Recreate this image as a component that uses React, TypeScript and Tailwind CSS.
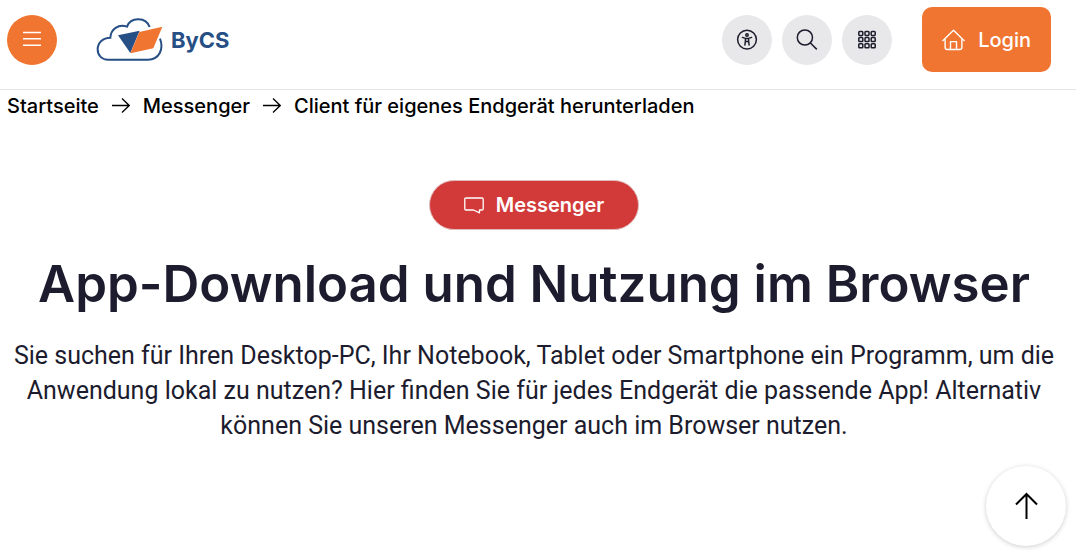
import React from 'react';

const crumbs = ['Startseite', 'Messenger', 'Client für eigenes Endgerät herunterladen'];

const Logo = () => (
  <svg width="66" height="43" viewBox="21 27 198 129" fill="none" overflow="visible" aria-hidden="true">
    <path
      d="M179 51 C169 21 122 19 111 50 C86 41 62 57 61 83 C39 83 23 98 23 118 C23 137 36 149 54 149 H174 C208 149 222 117 210 86"
      stroke="#264f85"
      strokeWidth="6"
    />
    <path d="M84 76 L149 62 L121 129 Z" fill="#264f85" />
    <path d="M148 66 L217 50 L190 115 L121 130 Z" fill="#f07531" />
  </svg>
);

const MenuIcon = () => (
  <svg width="18" height="18" viewBox="0 0 18 18" fill="none" stroke="currentColor" strokeWidth="1.4" aria-hidden="true">
    <path d="M0 1.5h18M0 7.8h18M0 14.2h18" />
  </svg>
);

const AccessIcon = () => (
  <svg width="22" height="22" viewBox="0 0 22 22" fill="none" stroke="currentColor" strokeWidth="1.5" strokeLinecap="round" strokeLinejoin="round" aria-hidden="true">
    <circle cx="11" cy="10.6" r="9.4" />
    <circle cx="11" cy="6" r="1.2" />
    <path d="M6.4 8.4 L9.4 9.4 V12 L8.9 16 M15.6 8.4 L12.6 9.4 V12 L13.1 16 M9.6 9.4 H12.4 M9.6 12.4 H12.4" />
  </svg>
);

const SearchIcon = () => (
  <svg width="22" height="22" viewBox="0 0 22 22" fill="none" stroke="currentColor" strokeWidth="1.5" aria-hidden="true">
    <circle cx="8.9" cy="8.5" r="7.6" />
    <path d="M14.2 13.8 L20.8 20.4" />
  </svg>
);

const GridIcon = () => (
  <svg width="20" height="20" viewBox="0 0 20 20" fill="none" stroke="currentColor" strokeWidth="1.5" aria-hidden="true">
    {[1.4, 7.6, 13.8].map((y) =>
      [1.8, 8, 14.2].map((x) => <rect key={`${x}-${y}`} x={x} y={y} width="4" height="4" rx="0.8" />)
    )}
  </svg>
);

const HomeIcon = () => (
  <svg width="24" height="22" viewBox="0 0 24 22" fill="none" stroke="currentColor" strokeWidth="1.4" strokeLinejoin="round" aria-hidden="true">
    <path d="M0.5 12 L11.5 1.2 L22.5 12" />
    <path d="M3.1 9.8 V18.2 Q3.1 20.5 5.4 20.5 H17.6 Q19.9 20.5 19.9 18.2 V9.8" />
    <path d="M8.5 20.4 V12.6 H14.5 V20.4" />
  </svg>
);

const ChatIcon = () => (
  <svg width="20" height="17" viewBox="0 0 20 17" fill="none" stroke="currentColor" strokeWidth="1.3" strokeLinejoin="round" aria-hidden="true">
    <path d="M2 1 H18 Q19.2 1 19.2 2.2 V11.8 Q19.2 13 18 13 H15.5 V15.8 L9.5 13 H2 Q0.8 13 0.8 11.8 V2.2 Q0.8 1 2 1 Z" />
  </svg>
);

const ArrowRight = () => (
  <svg width="18" height="16" viewBox="0 0 18 16" fill="none" stroke="currentColor" strokeWidth="1.3" aria-hidden="true">
    <path d="M0 7.5 H17 M10 0.5 L17.2 7.5 L10 14.5" />
  </svg>
);

const ArrowUp = () => (
  <svg width="24" height="28" viewBox="0 0 24 28" fill="none" stroke="currentColor" strokeWidth="2" aria-hidden="true">
    <path d="M12.5 27 V2 M2 12.5 L12.5 2 L23 12.5" />
  </svg>
);

const tools = [
  { label: 'Barrierefreiheit', icon: <AccessIcon /> },
  { label: 'Suche', icon: <SearchIcon /> },
  { label: 'Anwendungen', icon: <GridIcon /> },
];

export default function App() {
  return (
    <div className="min-h-screen bg-white font-['Inter',sans-serif] text-[#1c1c2e]">
      <header className="flex h-[90px] items-start justify-between border-b border-[#e5e5e7] pt-[7px] pr-[25px] pl-[7px]">
        <div className="flex items-center gap-10 pt-2">
          <button type="button" aria-label="Menü" className="flex size-[50px] items-center justify-center rounded-full bg-[#f07531] text-white">
            <MenuIcon />
          </button>
          <a href="#" className="flex items-center gap-2">
            <Logo />
            <span className="text-[22px] leading-7 font-bold text-[#264f85]">ByCS</span>
          </a>
        </div>
        <div className="flex items-center">
          <div className="flex gap-[10px]">
            {tools.map((tool) => (
              <button key={tool.label} type="button" aria-label={tool.label} className="flex size-[50px] items-center justify-center rounded-full bg-[#e8e8ea]">
                {tool.icon}
              </button>
            ))}
          </div>
          <button type="button" className="ml-[30px] flex h-[65px] items-center gap-3 rounded-[10px] bg-[#f07531] px-5 text-[20px] font-medium text-white">
            <HomeIcon />
            Login
          </button>
        </div>
      </header>

      <nav aria-label="Brotkrumen" className="px-[7px]">
        <ol className="flex flex-wrap items-center gap-[13px] text-[20px] leading-8 font-medium text-black">
          {crumbs.map((crumb, i) => (
            <li key={crumb} className="flex items-center gap-[13px]">
              {i > 0 && <ArrowRight />}
              <a href="#">{crumb}</a>
            </li>
          ))}
        </ol>
      </nav>

      <main className="flex flex-col items-center pt-[58px] pr-[15px] pb-10 pl-[7px] text-center">
        <a href="#" className="flex h-[50px] items-center gap-3 rounded-full border border-[#e0bcbc] bg-[#d23939] px-[34px] text-[20px] font-semibold text-white">
          <ChatIcon />
          Messenger
        </a>
        <h1 className="mt-6 text-[51px] leading-[60px] font-semibold">App-Download und Nutzung im Browser</h1>
        <p className="mt-6 font-['Roboto',sans-serif] text-[25px] leading-[35px]">
          Sie suchen für Ihren Desktop-PC, Ihr Notebook, Tablet oder Smartphone ein Programm, um die Anwendung lokal zu nutzen? Hier finden Sie für jedes Endgerät die passende App! Alternativ können Sie unseren Messenger auch im Browser nutzen.
        </p>
      </main>

      <button type="button" aria-label="Nach oben" className="fixed right-[10px] bottom-[10px] flex size-20 items-center justify-center rounded-full bg-white text-black shadow-[0_1px_5px_rgba(0,0,0,0.2)]">
        <ArrowUp />
      </button>
    </div>
  );
}
